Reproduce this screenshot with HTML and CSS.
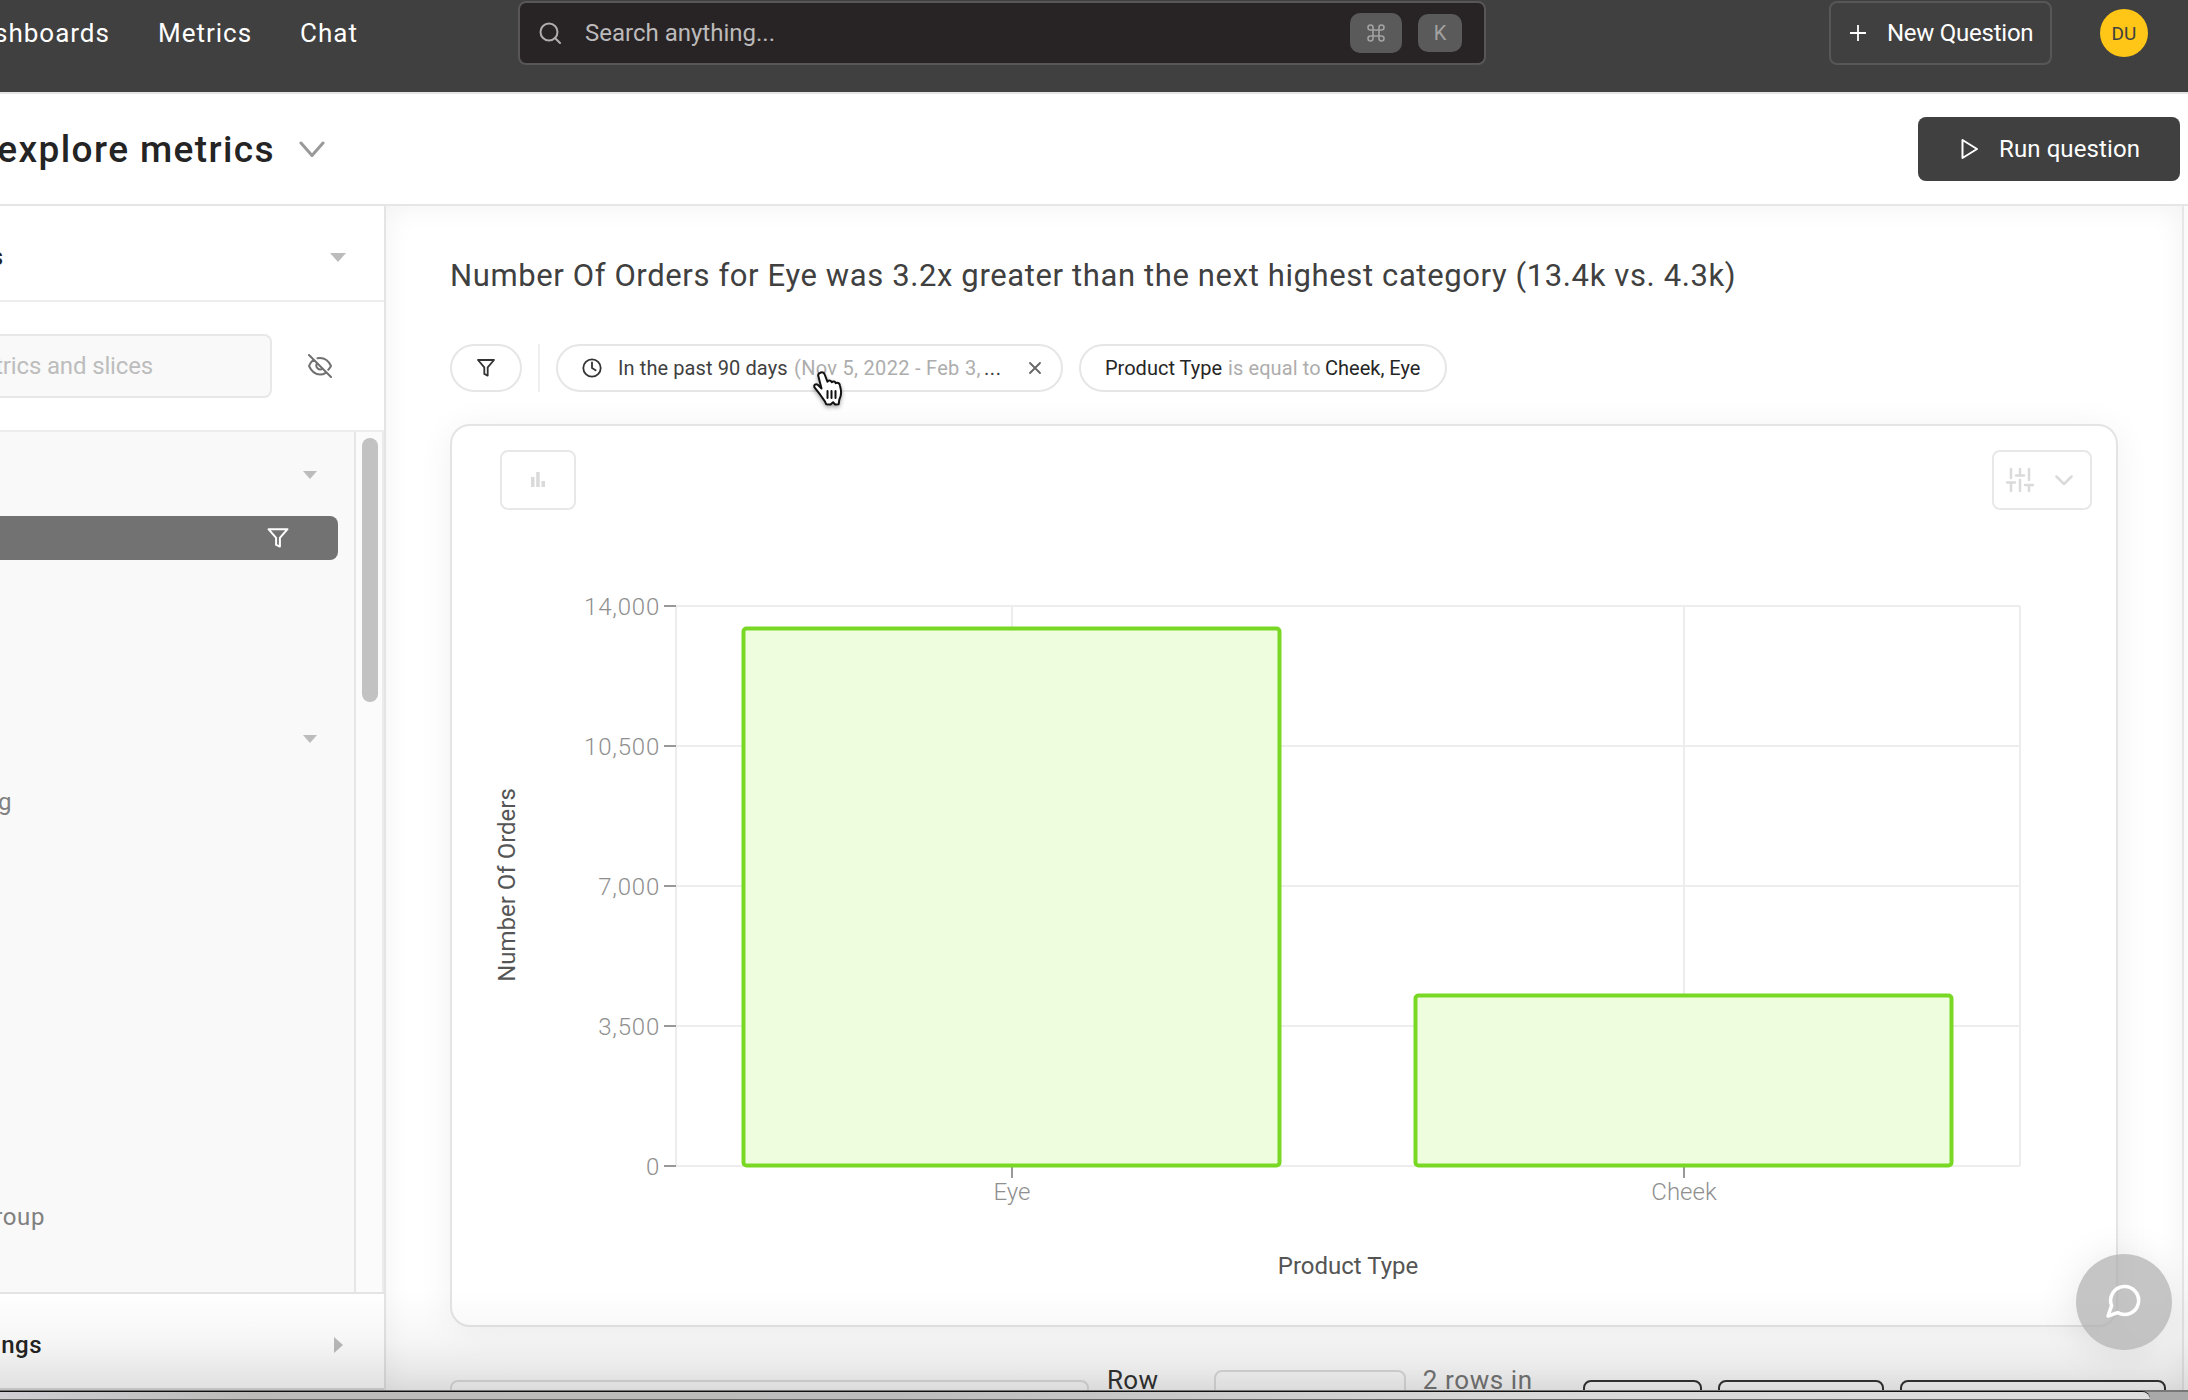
FILE: index.html
```html
<!DOCTYPE html>
<html lang="en">
<head>
<meta charset="utf-8">
<title>Explore metrics</title>
<link rel="stylesheet" href="styles.css">
</head>
<body>
<div class="app">
  <header class="topbar">
    <nav class="nav"><a>Dashboards</a><a>Metrics</a><a>Chat</a></nav>
    <div class="search">
      <svg class="ico" width="22" height="22" viewBox="0 0 22 22"><circle cx="10" cy="10" r="8.5"/><path d="M16 16l5 5"/></svg>
      <span class="search-text">Search anything...</span>
      <kbd class="key key-cmd"><svg width="18" height="18" viewBox="0 0 18 18"><path d="M6 6h6v6H6zM6 6V3.5A2.5 2.5 0 1 0 3.500 6H6M12 6h2.500A2.500 2.500 0 1 0 12 3.500V6M12 12v2.500A2.500 2.500 0 1 0 14.500 12H12M6 12H3.500A2.500 2.500 0 1 0 6 14.500V12"/></svg></kbd>
      <kbd class="key key-k">K</kbd>
    </div>
    <button class="new-question"><svg width="16" height="16" viewBox="0 0 16 16"><path d="M8 0v16M0 8h16"/></svg><span>New Question</span></button>
    <div class="avatar">DU</div>
  </header>

  <div class="titlebar">
    <div class="page-title"><span>explore metrics</span></div>
    <svg class="title-chevron" width="26" height="18" viewBox="0 0 26 18"><path d="M2 2l11 12.500L24 2"/></svg>
    <button class="run"><svg width="18" height="22" viewBox="0 0 18 22"><path d="M1.500 2v18l14.500-9z"/></svg><span>Run question</span></button>
  </div>

  <div class="body">
    <aside class="sidebar">
      <div class="side-head"><span class="clip clip-head">Metrics</span><svg width="16" height="9"><path d="M0 0h16l-8 9z"/></svg></div>
      <div class="side-search">
        <div class="side-input"><span>Search metrics and slices</span></div>
        <svg class="eye" width="24" height="24" viewBox="0 0 24 24"><path d="M1 1l22 22M9.500 4.300A10 10 0 0 1 12 4c5 0 8.800 3.200 11 8-.8 1.400-1.600 2.600-2.700 3.700M5.500 5.700C3.600 7.200 2 9.400 1 12c2.400 5.200 6.200 8.500 11 8.500 2.100 0 4-.6 5.700-1.700M9 9.300a4 4 0 0 0 5.400 5.600"/></svg>
      </div>
      <div class="side-scroll">
        <div class="list">
          <div class="group"><svg width="14" height="8"><path d="M0 0h14L7 8z"/></svg></div>
          <div class="selected"><svg width="22" height="20" viewBox="0 0 22 20"><path d="M1.500 1.200h19l-7.600 8.600v8.700l-3.800-1.600V9.800z"/></svg></div>
          <div class="group group-2"><svg width="14" height="8"><path d="M0 0h14L7 8z"/></svg></div>
          <div class="item item-a"><span>Marketing</span></div>
          <div class="item item-b"><span>Age Group</span></div>
        </div>
        <div class="track"><div class="thumb"></div></div>
      </div>
      <div class="side-foot"><span class="clip clip-foot">Settings</span><svg width="9" height="16"><path d="M0 0v16l9-8z"/></svg></div>
    </aside>

    <main class="main">
      <h1 class="headline">Number Of Orders for Eye was 3.2x greater than the next highest category (13.4k vs. 4.3k)</h1>
      <div class="filters">
        <div class="pill pill-icon"><svg width="18" height="18" viewBox="0 0 18 18"><path d="M1 1h16l-6.300 7.400v8.200l-3.400-1.700V8.400z"/></svg></div>
        <div class="divider"></div>
        <div class="pill pill-date">
          <svg width="20" height="20" viewBox="0 0 20 20"><circle cx="10" cy="10" r="8.700"/><path d="M10 4.500V10l3.600 2.200"/></svg>
          <span class="date-main">In the past 90 days</span><span class="date-range">(Nov 5, 2022 - Feb 3,</span><span class="dots">...</span>
          <svg class="x" width="12" height="12" viewBox="0 0 12 12"><path d="M1 1l10 10M11 1L1 11"/></svg>
        </div>
        <div class="pill pill-type"><span class="type-a">Product Type</span><span class="type-b">is equal to</span><span class="type-c">Cheek, Eye</span></div>
      </div>

      <section class="card">
        <div class="card-tools">
          <button class="tool tool-chart"><svg width="16" height="16" viewBox="0 0 16 16"><path d="M1 5h3.500v10H1zM6.200 0h3.500v15H6.200zM11.500 9H15v6h-3.500z"/></svg></button>
          <button class="tool tool-settings">
            <svg width="28" height="24" viewBox="0 0 28 24"><path d="M5 1v9M1 14.500h8M5 14.500V23M14 1v6.500M10 7.500h8M14 12v11M23 1v11M19 17h8M23 17v6"/></svg>
            <svg width="18" height="11" viewBox="0 0 18 11"><path d="M1.500 1.500L9 9l7.500-7.500"/></svg>
          </button>
        </div>
        <svg class="chart" width="1664" height="777" viewBox="452 548 1664 777">
          <g class="grid"><path d="M676 606H2020M676 746H2020M676 886H2020M676 1026H2020M676 1166H2020M676 606V1166M1012 606V1166M1684 606V1166M2020 606V1166"/></g>
          <g class="ticks"><path d="M664 606h12M664 746h12M664 886h12M664 1026h12M664 1166h12M1012 1166v12M1684 1166v12"/></g>
          <g class="bars"><rect x="743.500" y="628.500" width="536" height="537" rx="3"/><rect x="1415.500" y="995.500" width="536" height="170" rx="3"/></g>
          <g class="ylabels"><text x="660" y="615">14,000</text><text x="660" y="755">10,500</text><text x="660" y="895">7,000</text><text x="660" y="1035">3,500</text><text x="660" y="1175">0</text></g>
          <g class="xlabels"><text x="1012" y="1200">Eye</text><text x="1684" y="1200">Cheek</text></g>
          <text class="axis" x="1348" y="1274">Product Type</text>
          <text class="axis" transform="translate(515 885) rotate(-90)">Number Of Orders</text>
        </svg>
      </section>

      <div class="bottom-row">
        <div class="field field-a"></div>
        <span class="row-label">Row</span>
        <div class="field field-b"></div>
        <span class="rows-in">2 rows in</span>
        <div class="btn btn-a"></div><div class="btn btn-b"></div><div class="btn btn-c"></div>
      </div>
    </main>
    <div class="gutter"></div>
  </div>
  <div class="dock"><div class="dock-window"></div></div>

  <div class="shade"></div>
  <button class="fab"><svg width="36" height="36" viewBox="0 0 36 36"><path d="M3 33l3.600-10.400A14 14 0 1 1 12.600 29.600z"/></svg></button>
  <svg class="cursor" width="32" height="38" viewBox="0 0 32 38"><path d="M9 3.500c1.700-.6 3 .2 3.700 2l2.700 7.200c.8-1.600 3.600-1.500 4.300.5 1.200-1.300 3.500-.8 4 1 1.500-1 3.700-.2 4.200 2 1.400 5.500 2 9-.6 14.500l-.6 4.500-3.600.3-2-2.300-2.600 2.300-4.300-.3c-1-3.800-4.200-6.500-6-9.500L2.500 18.300c-1-2.500 1.200-4 3.500-2.300l3.500 3.500L6.300 7c-.5-1.700 1.200-3 2.700-3.500z"/><path class="cursor-lines" d="M15.500 22v7M19.500 22v7M23.500 22v7"/></svg>
</div>
</body>
</html>
```
FILE: styles.css
```css
* { box-sizing: border-box; }
body { margin: 0; font-family: Roboto, "Liberation Sans", sans-serif; color: #404040; }
button { font: inherit; padding: 0; margin: 0; background: none; border: 0; }
svg { display: block; flex: none; fill: none; stroke-linecap: round; stroke-linejoin: round; }
.app { position: relative; width: 2188px; height: 1400px; overflow: hidden; display: flex; flex-direction: column; background: #fff; }

.topbar { height: 94px; flex: none; background: #404040; border-bottom: 2px solid #e4e4e4; display: flex; align-items: flex-start; padding-top: 1px; color: #fff; }
.nav { width: 358px; height: 64px; flex: none; display: flex; align-items: center; justify-content: flex-end; gap: 48px; font-size: 26px; letter-spacing: 1px; }
.search { margin-left: 160px; width: 968px; height: 64px; flex: none; border: 2px solid #585657; border-radius: 8px; background: #282425; display: flex; align-items: center; padding: 0 22px 0 19px; }
.search .ico { stroke: #b0aeae; stroke-width: 2; }
.search-text { margin-left: 24px; flex: 1; font-size: 24px; color: #bcbaba; letter-spacing: 0; }
.key { font-family: inherit; border-radius: 10px; background: #5b5a5a; color: #a3a2a2; display: flex; align-items: center; justify-content: center; }
.key svg { stroke: #a3a2a2; stroke-width: 1.6; }
.key-cmd { width: 52px; height: 40px; }
.key-k { width: 44px; height: 38px; margin-left: 16px; font-size: 20px; }
.new-question { margin-left: 343px; width: 223px; height: 64px; flex: none; border: 2px solid #585657; border-radius: 8px; display: flex; align-items: center; gap: 21px; padding-left: 19px; font-size: 24px; color: #fff; letter-spacing: -.25px; white-space: nowrap; }
.new-question svg { stroke: #fff; stroke-width: 1.800; }
.avatar { margin: 8px 0 0 48px; width: 48px; height: 48px; border-radius: 50%; background: #ffc617; color: #404040; font-size: 19px; display: flex; align-items: center; justify-content: center; }

.titlebar { height: 112px; flex: none; border-bottom: 2px solid #e6e6e6; display: flex; align-items: center; }
.page-title { width: 275px; flex: none; overflow: hidden; display: flex; justify-content: flex-end; font-size: 37px; font-weight: 500; color: #242424; letter-spacing: 1.4px; white-space: nowrap; }
.title-chevron { margin: 2px 0 0 24px; stroke: #999; stroke-width: 3; }
.run { margin-left: auto; margin-right: 8px; width: 262px; height: 64px; border-radius: 8px; background: #404040; color: #fff; display: flex; align-items: center; padding-left: 43px; gap: 20px; font-size: 24px; letter-spacing: .1px; white-space: nowrap; }
.run svg { stroke: #fff; stroke-width: 2; }

.body { height: 1184px; flex: none; display: flex; }
.sidebar { width: 386px; flex: none; border-right: 2px solid #e4e4e4; display: flex; flex-direction: column; }
.clip { display: flex; justify-content: flex-end; font-weight: 500; color: #242424; font-size: 24px; white-space: nowrap; overflow: hidden; }
.clip-head { width: 3px; }
.clip-foot { width: 42px; letter-spacing: .5px; }
.side-head { height: 96px; flex: none; border-bottom: 2px solid #ededed; display: flex; align-items: center; justify-content: space-between; padding: 8px 38px 0 0; }
.side-head svg, .group svg, .side-foot svg { fill: #bcbcbc; }
.side-search { height: 130px; flex: none; border-bottom: 2px solid #ededed; display: flex; align-items: center; }
.side-input { width: 272px; height: 64px; border: 2px solid #e8e8e8; border-left: 0; border-radius: 0 8px 8px 0; background: #f9f9f9; display: flex; align-items: center; justify-content: flex-end; overflow: hidden; padding-right: 117px; font-size: 24px; letter-spacing: -.15px; color: #bdbdbd; white-space: nowrap; }
.eye { margin-left: 36px; stroke: #707070; stroke-width: 2; }
.side-scroll { height: 862px; flex: none; display: flex; border-bottom: 2px solid #e4e4e4; }
.list { width: 356px; flex: none; background: #f9f9f9; border-right: 2px solid #e6e6e6; overflow: hidden; }
.group { height: 84px; display: flex; align-items: center; justify-content: flex-end; padding: 2px 37px 0 0; }
.group-2 { margin-top: 136px; }
.selected { width: 338px; height: 44px; background: #727272; border-radius: 0 8px 8px 0; display: flex; align-items: center; justify-content: flex-end; padding-right: 49px; }
.selected svg { stroke: #fff; stroke-width: 2; }
.item { display: flex; justify-content: flex-end; font-size: 24px; line-height: 32px; color: #808080; white-space: nowrap; letter-spacing: .6px; }
.item-a { width: 12px; margin-top: 6px; }
.item-b { width: 45px; margin-top: 383px; }
.track { width: 28px; background: #fbfbfb; border-right: 2px solid #ebebeb; padding: 6px 0 0 6px; }
.thumb { width: 16px; height: 264px; border-radius: 8px; background: #c2c2c2; }
.side-foot { height: 96px; flex: none; display: flex; align-items: center; justify-content: space-between; padding: 8px 41px 0 0; border-bottom: 2px solid #dcdcdc; }

.main { width: 1796px; flex: none; padding: 46px 0 0 64px; overflow: hidden; box-shadow: inset 0 0 28px rgba(0,0,0,.06); display: flex; flex-direction: column; }
.headline { margin: 0; height: 48px; line-height: 48px; font-weight: 400; font-size: 31px; letter-spacing: .62px; white-space: nowrap; }
.filters { margin-top: 44px; height: 48px; flex: none; display: flex; font-size: 20px; }
.pill { border: 2px solid #e6e6e6; border-radius: 24px; background: #fff; display: flex; align-items: center; white-space: nowrap; }
.pill svg { stroke: #333; stroke-width: 1.800; }
.pill-icon { width: 72px; justify-content: center; }
.divider { width: 2px; margin: 0 16px; background: #f0f0f0; }
.pill-date { width: 507px; padding-left: 24px; }
.date-main { margin-left: 16px; width: 176px; color: #404040; letter-spacing: .1px; }
.date-range { width: 190px; color: #adadad; letter-spacing: .3px; }
.dots { width: 45px; letter-spacing: .6px; }
.pill .x { stroke: #666; }
.pill-type { margin-left: 16px; width: 368px; padding-left: 24px; color: #262626; }
.type-a { width: 123px; }
.type-b { width: 97px; color: #adadad; letter-spacing: .1px; }

.card { margin-top: 32px; width: 1668px; height: 903px; flex: none; border: 2px solid #e4e4e4; border-radius: 20px; background: #fff; box-shadow: 0 4px 36px rgba(0,0,0,.06); }
.card-tools { display: flex; justify-content: space-between; height: 122px; padding: 24px 24px 0 48px; }
.tool { height: 60px; border: 2px solid #e8e8e8; border-radius: 8px; display: flex; align-items: center; justify-content: center; }
.tool-chart { width: 76px; }
.tool-chart svg { fill: #dadada; }
.tool-settings { width: 100px; padding-right: 5px; gap: 21px; stroke: #dadada; stroke-width: 2.500; }
.chart { font-size: 24px; }
.grid path { stroke: #ededed; stroke-width: 2; stroke-linecap: butt; }
.ticks path { stroke: #999; stroke-width: 2; stroke-linecap: butt; }
.bars rect { fill: #effddf; stroke: #78d824; stroke-width: 4; }
.ylabels { fill: #8f8f8f; text-anchor: end; font-weight: 300; letter-spacing: .8px; }
.xlabels { fill: #8f8f8f; text-anchor: middle; font-weight: 300; }
.axis { fill: #555; text-anchor: middle; }

.bottom-row { margin-top: 43px; height: 40px; flex: none; display: flex; align-items: flex-start; font-size: 26px; line-height: 30px; white-space: nowrap; }
.field { height: 50px; border: 2px solid #dedede; border-radius: 8px; background: rgba(255,255,255,.2); flex: none; }
.field-a { width: 639px; margin-top: 10px; }
.row-label { margin: -5px 0 0 18px; width: 108px; color: #333; letter-spacing: .3px; }
.field-b { width: 192px; }
.rows-in { margin: -5px 0 0 17px; width: 162px; color: #777; letter-spacing: .6px; }
.btn { height: 50px; margin: 10px 16px 0 0; border: 2px solid #333; border-radius: 8px; flex: none; }
.btn-a { width: 119px; }
.btn-b { width: 166px; }
.btn-c { width: 266px; }
.gutter { flex: 1; background: #fafafa; border-left: 2px solid #e6e6e6; }

.dock { height: 10px; flex: none; background: #a9a9a9; border-top: 2px solid #777; position: relative; z-index: 3; }
.dock-window { width: 2150px; height: 8px; border-radius: 0 16px 0 0; background: linear-gradient(90deg, #cfcfd4 0, #bcbbb9 250px, #bdbdbd 900px, #d8d8d8 1500px, #dedede 100%); border-bottom: 1px solid #666; box-shadow: 0 -1px 0 #111; clip-path: inset(-2px 0 0 0); }
.shade { position: absolute; left: 0; right: 0; top: 1290px; height: 100px; background: linear-gradient(rgba(0,0,0,0), rgba(0,0,0,.035) 50%, rgba(0,0,0,.12)); }
.fab { position: absolute; left: 2076px; top: 1254px; width: 96px; height: 96px; border-radius: 50%; background: rgba(172,172,172,.7); box-shadow: 0 4px 40px rgba(0,0,0,.1); display: flex; align-items: center; justify-content: center; }
.fab svg { stroke: #fff; stroke-width: 3.500; margin: -2px 2px 0 0; }
.cursor { position: absolute; left: 812px; top: 369px; fill: #fff; stroke: #111; stroke-width: 2; filter: drop-shadow(0 2px 2px rgba(0,0,0,.35)); }
```
